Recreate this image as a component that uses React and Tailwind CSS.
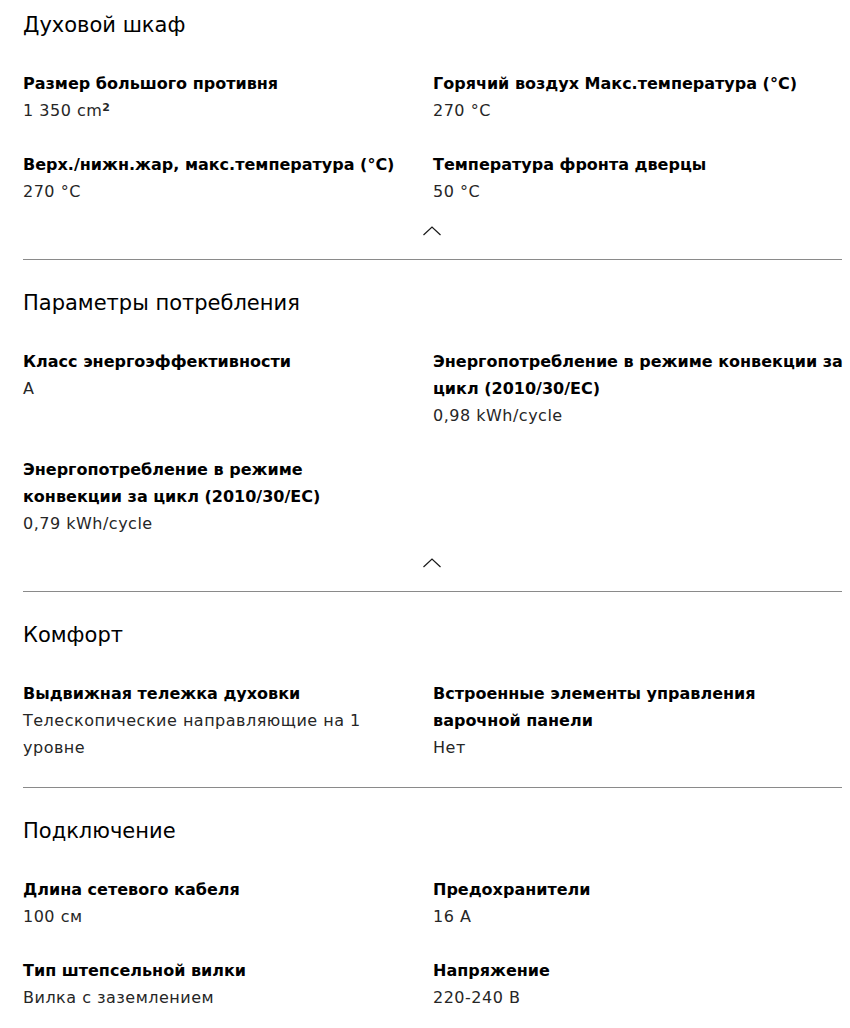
import React from "react";

const sections = [
  {
    title: "Духовой шкаф",
    chevron: true,
    rows: [
      [
        { l: "Размер большого противня", v: <>1 350 cm<span className="relative -top-[5px] text-[11px] leading-[0] font-bold">2</span></> },
        { l: "Горячий воздух Макс.температура (°C)", v: "270 °C" },
      ],
      [
        { l: "Верх./нижн.жар, макс.температура (°C)", v: "270 °C" },
        { l: "Температура фронта дверцы", v: "50 °C" },
      ],
    ],
  },
  {
    title: "Параметры потребления",
    chevron: true,
    rows: [
      [
        { l: "Класс энергоэффективности", v: "A" },
        { l: "Энергопотребление в режиме конвекции за цикл (2010/30/EC)", v: "0,98 kWh/cycle" },
      ],
      [
        { l: "Энергопотребление в режиме конвекции за цикл (2010/30/EC)", v: "0,79 kWh/cycle" },
        null,
      ],
    ],
  },
  {
    title: "Комфорт",
    chevron: false,
    rows: [
      [
        { l: "Выдвижная тележка духовки", v: "Телескопические направляющие на 1 уровне" },
        { l: <>Встроенные элементы управления<br />варочной панели</>, v: "Нет" },
      ],
    ],
  },
  {
    title: "Подключение",
    chevron: false,
    last: true,
    rows: [
      [
        { l: "Длина сетевого кабеля", v: "100 см" },
        { l: "Предохранители", v: "16 A" },
      ],
      [
        { l: "Тип штепсельной вилки", v: "Вилка с заземлением" },
        { l: "Напряжение", v: "220-240 В" },
      ],
    ],
  },
];

function Item({ item, left }) {
  if (!item) return <div />;
  return (
    <div className={left ? "pr-[32px]" : ""}>
      <div className="font-bold text-[16px] leading-[27px] text-black">{item.l}</div>
      <div className="text-[16px] leading-[27px] tracking-[0.5px] text-[#262626]">{item.v}</div>
    </div>
  );
}

function Chevron() {
  return (
    <div className="flex justify-center pt-[18px] pb-[20px] pr-[8px]">
      <svg width="20" height="16" viewBox="0 0 20 16" className="ml-[-2px]">
        <polyline points="1.5,12 10,4 18.5,12" fill="none" stroke="#1a1a1a" strokeWidth="1.2" />
      </svg>
    </div>
  );
}

export default function App() {
  return (
    <div className="bg-white w-[850px] min-h-[1028px] pl-[23px]" style={{ fontFamily: '"DejaVu Sans", sans-serif' }}>
      {sections.map((s, i) => (
        <section key={i} className={i === 0 ? "pt-[9px]" : "pt-[27px]"}>
          <h2 className="text-[21px] leading-[32px] font-normal text-black">{s.title}</h2>
          <div className="mt-[29px] flex flex-col gap-y-[27px]">
            {s.rows.map((r, j) => (
              <div key={j} className="grid grid-cols-[410px_1fr]">
                <Item item={r[0]} left />
                <Item item={r[1]} />
              </div>
            ))}
          </div>
          {s.chevron ? <Chevron /> : !s.last && <div className="h-[26px]" />}
          {!s.last && <div className="h-px bg-[#8a8a8a] mr-[8px]" />}
        </section>
      ))}
    </div>
  );
}
